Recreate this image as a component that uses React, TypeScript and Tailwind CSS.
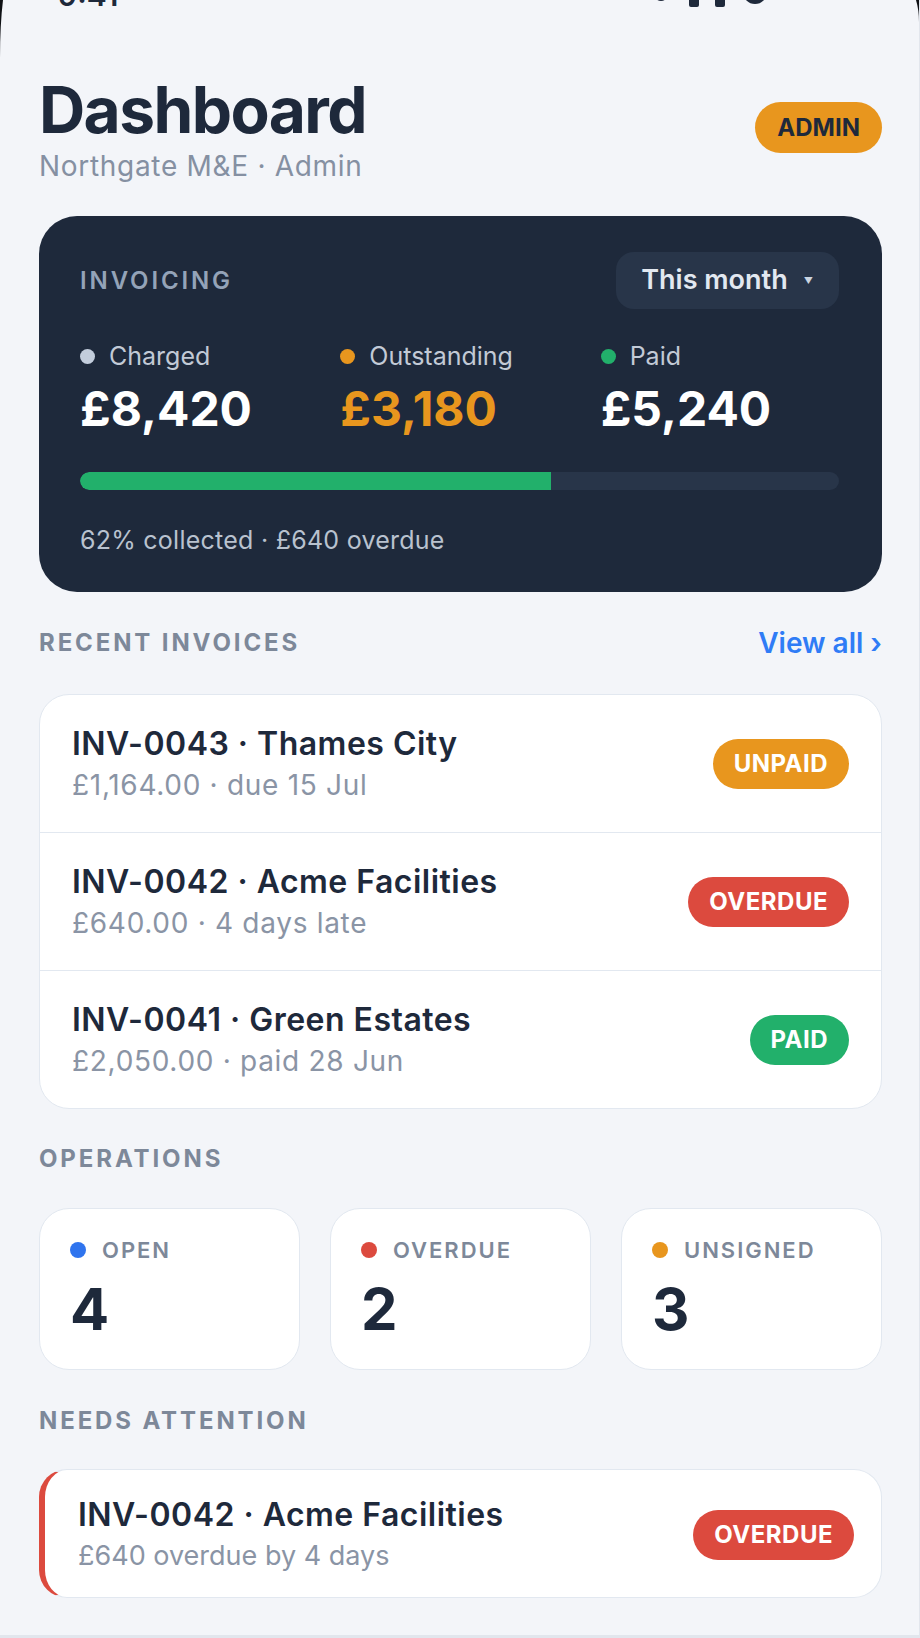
import React from 'react';

type Tone = 'orange' | 'red' | 'green';

const badgeBg: Record<Tone, string> = {
  orange: 'bg-[#e8961e]',
  red: 'bg-[#dc4a3e]',
  green: 'bg-[#22b06b]',
};

function Badge({ label, tone }: { label: string; tone: Tone }) {
  return (
    <span
      className={`${badgeBg[tone]} inline-flex h-[50px] shrink-0 items-center rounded-full px-[21px] text-[24px] font-bold leading-none tracking-[0.02em] text-white`}
    >
      {label}
    </span>
  );
}

function SectionTitle({ children }: { children: React.ReactNode }) {
  return (
    <h2 className="text-[24px] font-bold uppercase leading-[30px] tracking-[0.12em] text-[#7d8899]">
      {children}
    </h2>
  );
}

const invoices: { title: string; sub: string; status: string; tone: Tone }[] = [
  { title: 'INV-0043 · Thames City', sub: '£1,164.00 · due 15 Jul', status: 'UNPAID', tone: 'orange' },
  { title: 'INV-0042 · Acme Facilities', sub: '£640.00 · 4 days late', status: 'OVERDUE', tone: 'red' },
  { title: 'INV-0041 · Green Estates', sub: '£2,050.00 · paid 28 Jun', status: 'PAID', tone: 'green' },
];

const totals = [
  { label: 'Charged', value: '£8,420', dot: 'bg-[#c3cddc]', text: 'text-white' },
  { label: 'Outstanding', value: '£3,180', dot: 'bg-[#e8961e]', text: 'text-[#e8961e]' },
  { label: 'Paid', value: '£5,240', dot: 'bg-[#22b06b]', text: 'text-white' },
];

const operations = [
  { label: 'OPEN', value: 4, dot: 'bg-[#2f74ee]' },
  { label: 'OVERDUE', value: 2, dot: 'bg-[#dc4a3e]' },
  { label: 'UNSIGNED', value: 3, dot: 'bg-[#e8961e]' },
];

export default function App() {
  const collected = 62;

  return (
    <div className="relative h-[1638px] w-[920px] overflow-hidden border-r border-b-[3px] border-[#e2e6ed] bg-[#f3f5f9] font-['Inter',sans-serif] text-[#1e293b]">
      {/* phone frame corners peeking in at the top */}
      <svg className="absolute left-0 top-0" width="6" height="60" viewBox="0 0 6 60">
        <path d="M0 0 H3 Q0 25 0 58 Z" fill="#0f1115" />
      </svg>
      <svg className="absolute right-0 top-0" width="6" height="24" viewBox="0 0 6 24">
        <path d="M6 0 H3 Q6 10 6 22 Z" fill="#0f1115" />
      </svg>

      {/* status bar, mostly scrolled out of view */}
      <div className="flex h-[10px] items-end overflow-hidden">
        <span className="ml-[58px] text-[30px] font-semibold leading-none text-[#1e293b]">9:41</span>
        <svg className="ml-auto mr-[150px] self-start" width="120" height="10" viewBox="0 0 120 10">
          <circle cx="12" cy="-6" r="7" fill="#1e293b" />
          <rect x="40" y="-12" width="10" height="19" rx="2" fill="#1e293b" />
          <rect x="66" y="-12" width="10" height="19" rx="2" fill="#1e293b" />
          <circle cx="106" cy="-8" r="12" fill="#1e293b" />
        </svg>
      </div>

      <div className="pl-[39px] pr-[37px]">
        {/* header */}
        <div className="mt-[68px] flex items-start justify-between">
          <div>
            <h1 className="text-[64px] font-bold leading-none tracking-tight text-[#1e293b]">Dashboard</h1>
            <p className="mt-[7px] text-[28px] leading-[34px] tracking-[0.025em] text-[#8590a2]">Northgate M&amp;E · Admin</p>
          </div>
          <span className="mt-[24px] inline-flex h-[51px] items-center rounded-full bg-[#e8961e] px-[22px] text-[24px] font-bold leading-none text-[#1e293b]">
            ADMIN
          </span>
        </div>

        {/* invoicing summary */}
        <section className="mt-[33px] rounded-[38px] bg-[#1e293b] pb-[37px] pl-[41px] pr-[43px] pt-[36px]">
          <div className="flex items-center justify-between">
            <span className="text-[24px] font-semibold leading-[30px] tracking-[0.12em] text-[#94a3b8]">INVOICING</span>
            <button className="flex h-[57px] items-center gap-[16px] rounded-[18px] bg-[#283549] pl-[25px] pr-[26px] text-[27px] font-semibold text-[#e2e8f0]">
              This month
              <span className="text-[9px] text-[#cbd5e1]">▼</span>
            </button>
          </div>

          <div className="mt-[32px] grid grid-cols-3 gap-x-[22px]">
            {totals.map((t) => (
              <div key={t.label}>
                <div className="flex items-center gap-[14px] text-[25px] leading-[30px] text-[#c2cad6]">
                  <span className={`${t.dot} h-[15px] w-[15px] rounded-full`} />
                  {t.label}
                </div>
                <div className={`${t.text} mt-[14px] text-[48px] font-bold leading-none`}>{t.value}</div>
              </div>
            ))}
          </div>

          <div className="mt-[39px] h-[18px] w-full overflow-hidden rounded-full bg-[#283549]">
            <div className="h-full rounded-l-full bg-[#22b06b]" style={{ width: `${collected}%` }} />
          </div>

          <p className="mt-[35px] text-[25px] leading-[30px] tracking-[0.01em] text-[#b9c2cf]">62% collected · £640 overdue</p>
        </section>

        {/* recent invoices */}
        <div className="mt-[36px] flex items-center justify-between">
          <SectionTitle>Recent invoices</SectionTitle>
          <a className="text-[28px] font-semibold leading-[30px] text-[#2f7cf6]">View all ›</a>
        </div>

        <div className="mt-[36px] overflow-hidden rounded-[30px] border border-[#e2e8f0] bg-white">
          {invoices.map((inv, i) => (
            <div
              key={inv.title}
              className={`flex items-center justify-between px-[32px] py-[30px] ${i > 0 ? 'border-t border-[#e2e8f0]' : ''}`}
            >
              <div>
                <div className="text-[32px] font-semibold leading-[38px] tracking-[0.015em] text-[#1e293b]">{inv.title}</div>
                <div className="mt-[5px] text-[28px] leading-[34px] tracking-[0.025em] text-[#8a94a5]">{inv.sub}</div>
              </div>
              <Badge label={inv.status} tone={inv.tone} />
            </div>
          ))}
        </div>

        {/* operations */}
        <div className="mt-[35px]">
          <SectionTitle>Operations</SectionTitle>
        </div>
        <div className="mt-[34px] grid grid-cols-3 gap-[30px]">
          {operations.map((op) => (
            <div key={op.label} className="rounded-[30px] border border-[#e2e8f0] bg-white px-[30px] pb-[31px] pt-[27px]">
              <div className="flex items-center gap-[16px] text-[22px] font-semibold leading-[28px] tracking-[0.09em] text-[#7d8899]">
                <span className={`${op.dot} h-[16px] w-[16px] rounded-full`} />
                {op.label}
              </div>
              <div className="mt-[16px] text-[58px] font-bold leading-none text-[#1e293b]">{op.value}</div>
            </div>
          ))}
        </div>

        {/* needs attention */}
        <div className="mt-[36px]">
          <SectionTitle>Needs attention</SectionTitle>
        </div>
        <div className="mt-[33px] flex items-center justify-between rounded-[28px] border border-l-[6px] border-[#e2e8f0] border-l-[#dc4a3e] bg-white pb-[24px] pl-[33px] pr-[27px] pt-[26px]">
          <div>
            <div className="text-[32px] font-semibold leading-[38px] tracking-[0.015em] text-[#1e293b]">INV-0042 · Acme Facilities</div>
            <div className="mt-[5px] text-[27px] leading-[34px] text-[#8a94a5]">£640 overdue by 4 days</div>
          </div>
          <Badge label="OVERDUE" tone="red" />
        </div>
      </div>
    </div>
  );
}
